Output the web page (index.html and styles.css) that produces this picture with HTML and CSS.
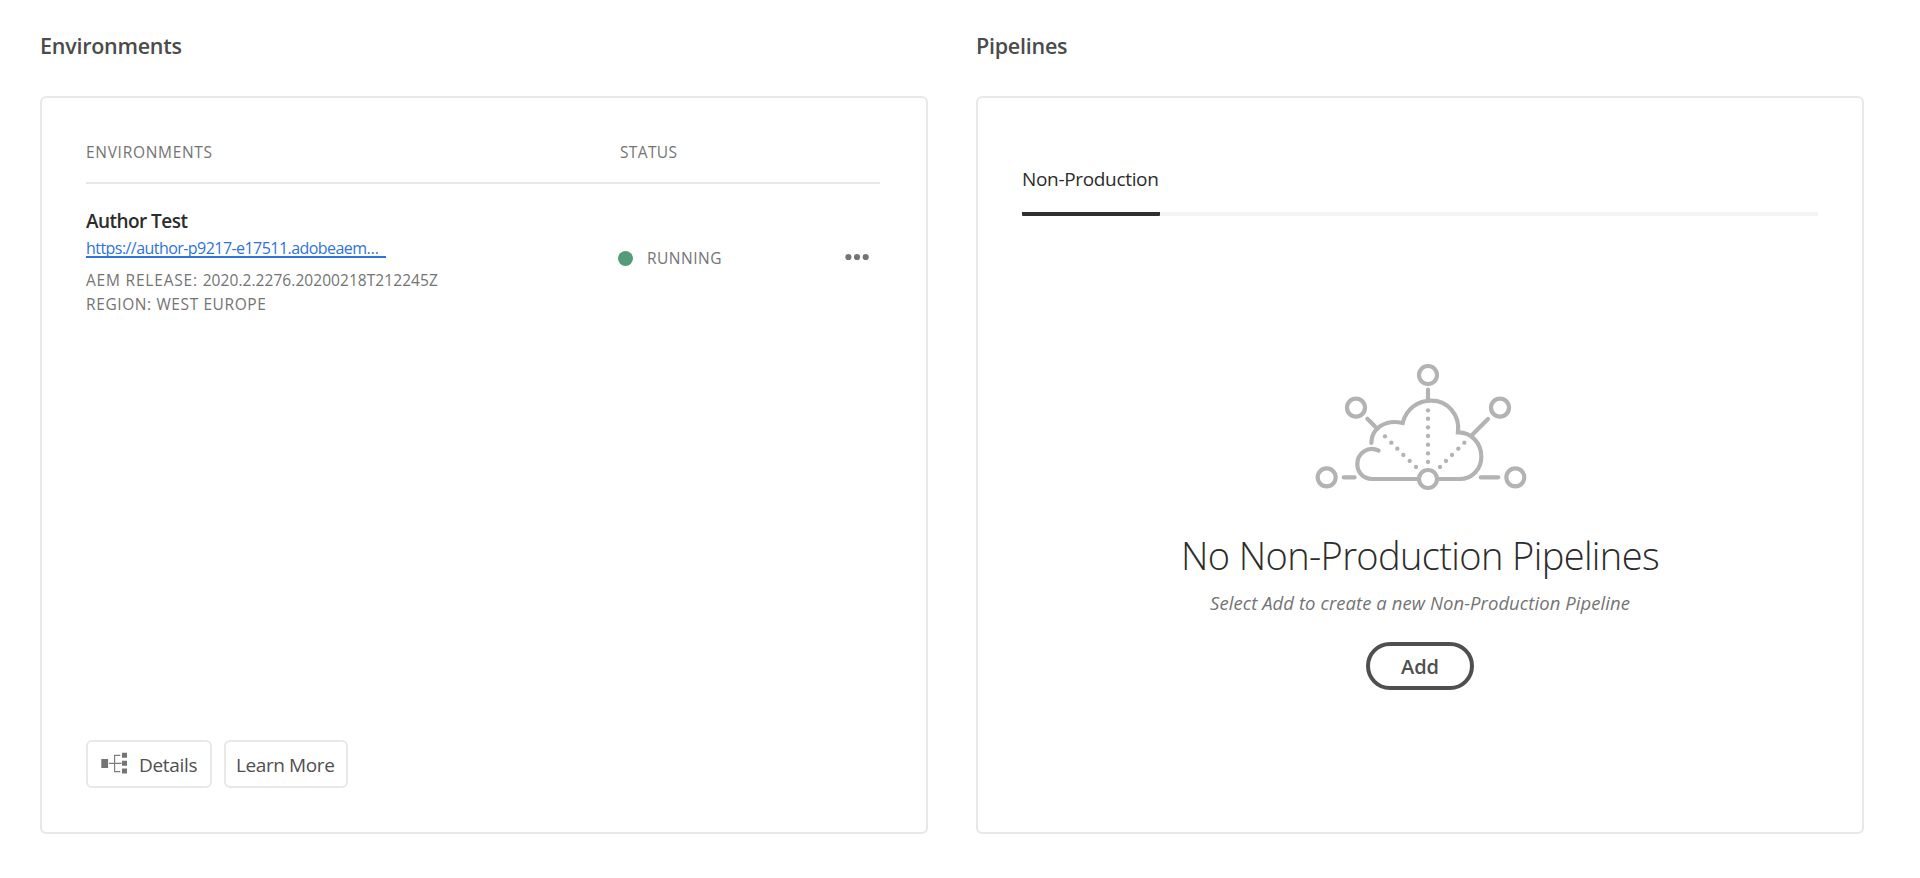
FILE: index.html
```html
<!DOCTYPE html>
<html lang="en">
<head>
<meta charset="utf-8">
<title>Environments and Pipelines</title>
<link rel="stylesheet" href="styles.css">
</head>
<body>
<main class="overview">
  <section class="panel">
    <h2 class="panel-title">Environments</h2>
    <div class="card card-env">
      <div class="env-grid env-head">
        <span class="label label-env">Environments</span>
        <span class="label label-status">Status</span>
      </div>
      <div class="env-grid env-row">
        <div class="env-info">
          <h3 class="env-name">Author Test</h3>
          <a class="env-link">https://author-p9217-e17511.adobeaem…</a>
          <div class="label release">AEM Release: <span class="version">2020.2.2276.20200218T212245Z</span></div>
          <div class="label region">Region: West Europe</div>
        </div>
        <div class="env-status">
          <span class="dot"></span>
          <span class="label running">Running</span>
          <svg class="more" width="24" height="8" viewBox="0 0 24 8"><circle cx="3.4" cy="4" r="3.1"/><circle cx="12" cy="4" r="3.1"/><circle cx="20.7" cy="4" r="3.1"/></svg>
        </div>
      </div>
      <div class="actions">
        <button class="btn btn-details">
          <svg width="28" height="23" viewBox="0 0 28 23">
            <path fill="#747474" d="M1.3 7h6.8v9H1.3zM22 .8h5v5h-5zM22 8.7h5v5h-5zM22 16.6h5v5h-5z"/>
            <path fill="none" stroke="#7c7c7c" stroke-width="1.2" d="M9 11.4h12.5M20.3 3.3h-5.7v16.4h5.7"/>
          </svg>
          <span>Details</span>
        </button>
        <button class="btn btn-learn">Learn More</button>
      </div>
    </div>
  </section>
  <section class="panel">
    <h2 class="panel-title">Pipelines</h2>
    <div class="card card-pipe">
      <div class="tabs"><span class="tab">Non-Production</span></div>
      <div class="empty">
        <svg class="art" width="240" height="150" viewBox="0 0 720 450" fill="none" stroke="#b3b3b3" stroke-width="12.5" stroke-linecap="round" stroke-linejoin="miter">
          <circle cx="384" cy="75" r="27"/>
          <circle cx="168" cy="173" r="27"/>
          <circle cx="600" cy="173" r="27"/>
          <circle cx="80" cy="382" r="27"/>
          <circle cx="646" cy="382" r="27"/>
          <circle cx="384" cy="387" r="27"/>
          <path d="M384 119v30M202 206l30 30M564 207l-51 51M131 382h33M542 382h53"/>
          <path d="M355 387H216C189 387 172 366 172 343C172 308 205 287 236 302"/>
          <path d="M214 279C214 235 256 207 308 219C319 176 354 152 394 152C443 152 480 194 474 247C513 246 544 279 544 320C544 357 516 387 480 387H411"/>
          <g fill="#b3b3b3" stroke="none">
            <circle cx="384" cy="181" r="6.5"/><circle cx="384" cy="206" r="6.5"/><circle cx="384" cy="232" r="6.5"/><circle cx="384" cy="258" r="6.5"/><circle cx="384" cy="284" r="6.5"/><circle cx="384" cy="310" r="6.5"/><circle cx="384" cy="336" r="6.5"/>
            <circle cx="255" cy="259" r="6.5"/><circle cx="274" cy="278" r="6.5"/><circle cx="292" cy="296" r="6.5"/><circle cx="310" cy="315" r="6.5"/><circle cx="329" cy="333" r="6.5"/><circle cx="348" cy="351" r="6.5"/>
            <circle cx="493" cy="278" r="6.5"/><circle cx="475" cy="296" r="6.5"/><circle cx="456" cy="315" r="6.5"/><circle cx="438" cy="333" r="6.5"/><circle cx="420" cy="351" r="6.5"/>
          </g>
        </svg>
        <h1 class="empty-title">No Non-Production Pipelines</h1>
        <p class="empty-text">Select Add to create a new Non-Production Pipeline</p>
        <button class="btn-add">Add</button>
      </div>
    </div>
  </section>
</main>
</body>
</html>
```
FILE: styles.css
```css
* { box-sizing: border-box; }
body {
  margin: 0;
  background: #fff;
  font-family: "Open Sans", "Noto Sans", sans-serif;
  color: #2c2c2c;
}
h1, h2, h3, p { margin: 0; }
button { font-family: inherit; background: none; cursor: pointer; }

.overview {
  display: grid;
  grid-template-columns: 888px 888px;
  gap: 48px;
  padding: 22px 40px 0;
}
.panel-title {
  margin-bottom: 26px;
  font-size: 21.5px;
  line-height: 48px;
  font-weight: 650;
  letter-spacing: -.25px;
  color: #4b4b4b;
}
.card {
  display: flex;
  flex-direction: column;
  height: 738px;
  border: 2px solid #e8e8e8;
  border-radius: 6px;
}
.card-env { padding: 42px 46px 44px 44px; }
.card-pipe { padding: 67px 44px 0; }

.label {
  font-size: 15.5px;
  line-height: 24px;
  letter-spacing: .5px;
  color: #747474;
  text-transform: uppercase;
}
.label-env { letter-spacing: .7px; }
.label-status { padding-left: 3px; letter-spacing: .35px; }
.release { margin-top: 10px; letter-spacing: .8px; white-space: nowrap; }
.version { letter-spacing: .06px; }
.region { letter-spacing: .6px; }

.env-grid { display: grid; grid-template-columns: 531px 1fr; }
.env-head { padding-bottom: 18px; border-bottom: 2px solid #e8e8e8; }
.env-row { margin-top: 23px; }
.env-info { display: flex; flex-direction: column; }
.env-name {
  font-size: 19px;
  line-height: 28px;
  font-weight: 650;
  letter-spacing: -.55px;
}
.env-link {
  width: 300px;
  margin-top: 5px;
  font-size: 16px;
  line-height: 16px;
  letter-spacing: -.55px;
  white-space: nowrap;
  color: #2d73e0;
  border-bottom: 2px solid #2d73e0;
}
.env-status {
  display: flex;
  align-items: center;
  align-self: start;
  margin-top: 39px;
  padding: 0 11px 0 .5px;
}
.dot {
  width: 15px;
  height: 15px;
  margin: 1px 14.5px 0 0;
  border-radius: 50%;
  background: #529c79;
}
.more { margin: 0 0 2px auto; fill: #747474; }

.actions { display: flex; gap: 12px; margin-top: auto; }
.btn {
  display: flex;
  align-items: center;
  height: 48px;
  padding: 2px 0 0 10px;
  border: 2px solid #e8e8e8;
  border-radius: 6px;
  font-size: 19px;
  letter-spacing: -.3px;
  white-space: nowrap;
  color: #4f4f4f;
}
.btn-details { width: 126px; gap: 11px; padding-left: 12px; }
.btn-details svg { flex: none; margin-bottom: 4px; }
.btn-learn { width: 124px; letter-spacing: -.4px; }

.tabs { display: flex; height: 51px; border-bottom: 4px solid #f4f4f4; }
.tab {
  width: 138px;
  height: 51px;
  border-bottom: 4px solid #2f2f2f;
  border-radius: 1px;
  font-size: 19px;
  line-height: 28px;
  letter-spacing: -.33px;
  white-space: nowrap;
}
.empty { display: flex; flex-direction: column; align-items: center; margin-top: 134px; }
.empty-title {
  margin-top: 30px;
  font-size: 38px;
  line-height: 50px;
  font-weight: 300;
  letter-spacing: -.62px;
}
.empty-text {
  margin-top: 10px;
  font-size: 18.5px;
  line-height: 26px;
  font-style: italic;
  letter-spacing: .06px;
  color: #747474;
}
.btn-add {
  width: 108px;
  height: 48px;
  margin-top: 26px;
  padding: 0;
  border: 4px solid #4f4f4f;
  border-radius: 24px;
  font-size: 20px;
  font-weight: 650;
  color: #4f4f4f;
}
```
